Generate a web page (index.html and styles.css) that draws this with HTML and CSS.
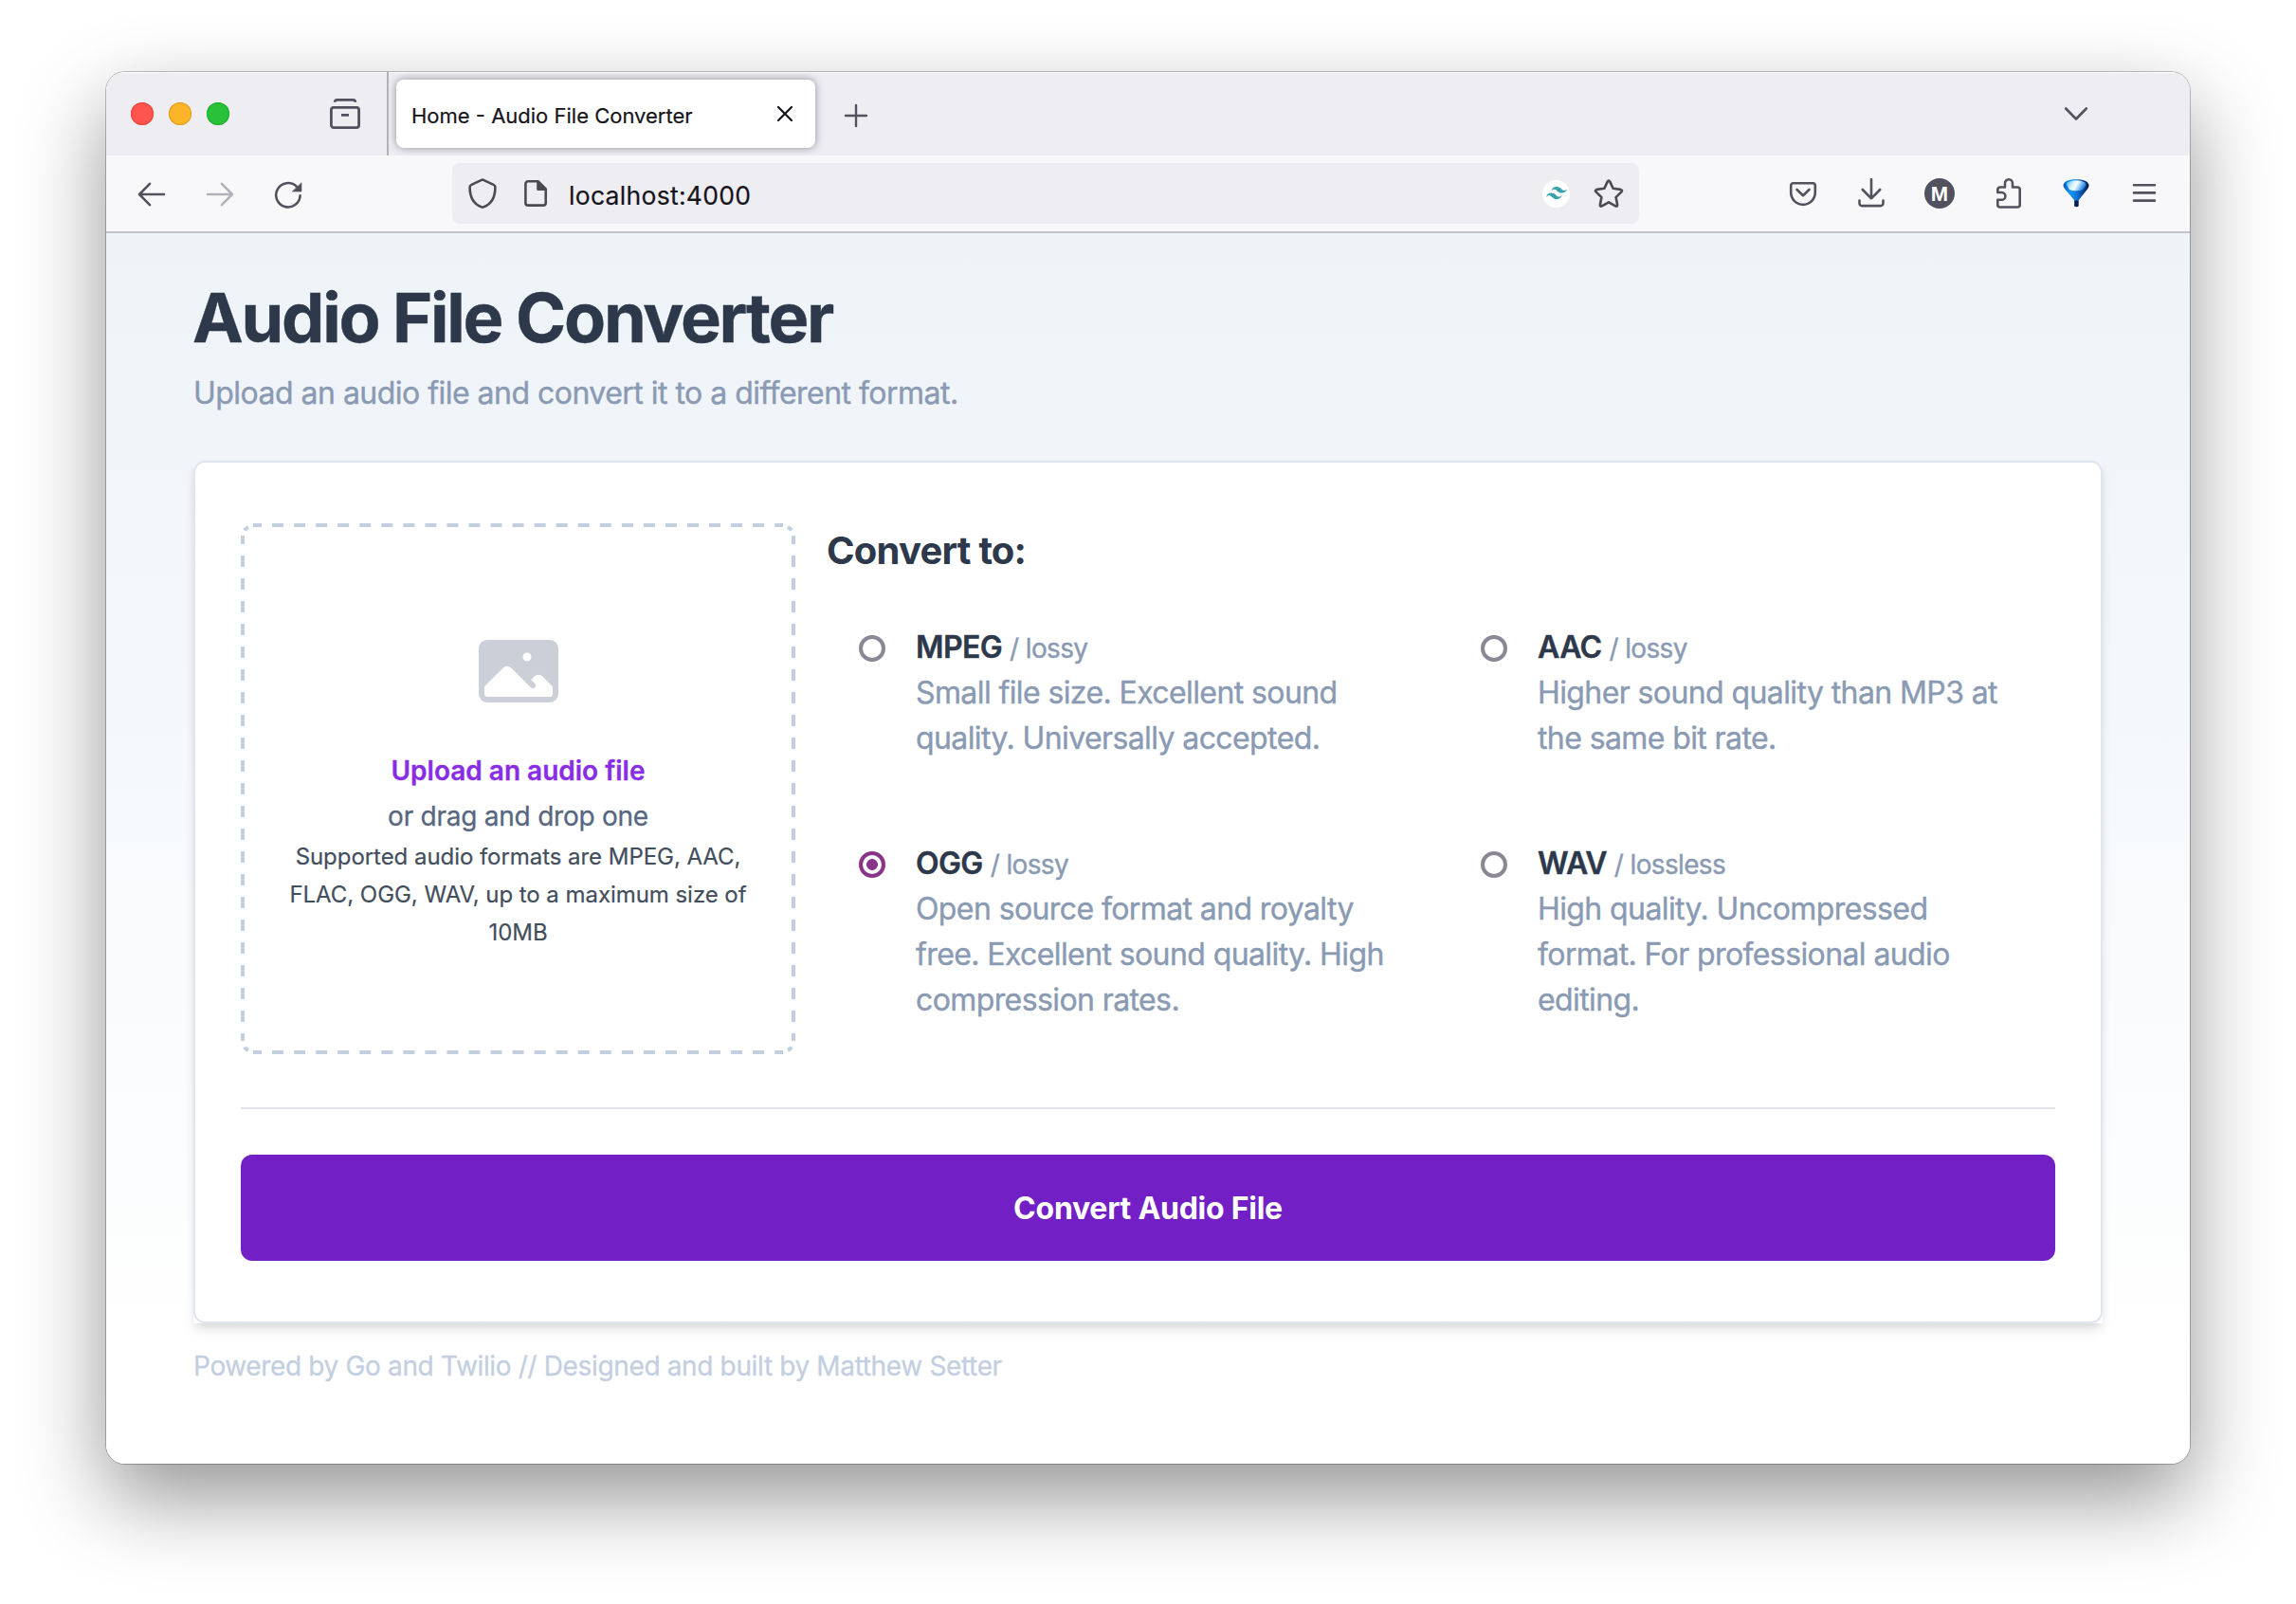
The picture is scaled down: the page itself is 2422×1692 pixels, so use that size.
FILE: index.html
```
<!DOCTYPE html>
<html lang="en">
<head>
<meta charset="utf-8">
<title>Home - Audio File Converter</title>
<link rel="stylesheet" href="styles.css">
</head>
<body>
<div class="window">
  <header class="tabbar">
    <div class="lights"><span class="light red"></span><span class="light yellow"></span><span class="light green"></span></div>
    <svg class="icon view-icon" viewBox="0 0 32 32"><rect x="1.4" y="9.4" width="29.2" height="21.2" rx="2.6"/><path d="M5.2 3.8C5.2 2.4 6 1.4 7.6 1.4h16.8c1.6 0 2.4 1 2.4 2.4M12 17.4h8"/></svg>
    <div class="tab">
      <span class="tab-title">Home - Audio File Converter</span>
      <svg class="tab-close" viewBox="0 0 16 16"><path d="M1 1l14 14M15 1L1 15"/></svg>
    </div>
    <svg class="icon new-tab" viewBox="0 0 32 32"><path d="M16 5v22M5 16h22"/></svg>
    <svg class="icon tabs-menu" viewBox="0 0 32 32"><path d="M5.2 10.500L16 21.500l10.800-11"/></svg>
  </header>

  <div class="toolbar">
    <nav class="nav">
      <svg class="icon" viewBox="0 0 32 32"><path d="M29 17H3.500M14 5.800L3 17l11 11.200"/></svg>
      <svg class="icon disabled" viewBox="0 0 32 32"><path d="M3 17h25.500M18 5.800L29 17 18 28.200"/></svg>
      <svg class="icon" viewBox="0 0 32 32"><path d="M28.600 18.200A12.700 12.700 0 1 1 24.800 8.700"/><path class="solid" d="M30 5v9h-9.500z" stroke-width="0.600"/></svg>
    </nav>
    <div class="urlbar">
      <svg class="icon dark" viewBox="0 0 32 32"><path d="M16 1.600c.4 0 .7.1 1 .3l10.600 5c1.200.5 1.800 1.300 1.800 2.500C29.400 19 26 27 17 30.400a2.500 2.500 0 0 1-2 0C6 27 2.600 19 2.600 9.400c0-1.200.6-2 1.800-2.500l10.600-5c.3-.2.6-.3 1-.3z"/></svg>
      <svg class="icon dark page-icon" viewBox="0 0 32 32"><path d="M8 3.300h10.500l8.200 8.200V26a2.600 2.600 0 0 1-2.600 2.600H8A2.600 2.600 0 0 1 5.400 26V5.900A2.600 2.600 0 0 1 8 3.300z"/><path class="solid" d="M18.500 3.500v8.200h8.200z"/></svg>
      <span class="url">localhost:4000</span>
      <span class="badge"><svg viewBox="0 0 54 33"><path d="M27 0c-7.200 0-11.700 3.600-13.500 10.800 2.700-3.600 5.850-4.950 9.450-4.050 2.054.513 3.522 2.004 5.147 3.653C30.744 13.090 33.808 16.200 40.500 16.200c7.200 0 11.700-3.600 13.500-10.800-2.700 3.600-5.850 4.950-9.450 4.050-2.054-.513-3.522-2.004-5.147-3.653C36.756 3.110 33.692 0 27 0zM13.500 16.200C6.300 16.200 1.800 19.800 0 27c2.700-3.600 5.850-4.950 9.450-4.050 2.054.514 3.522 2.004 5.147 3.653C17.244 29.290 20.308 32.400 27 32.400c7.200 0 11.700-3.600 13.500-10.800-2.700 3.600-5.850 4.950-9.450 4.050-2.054-.513-3.522-2.004-5.147-3.653C23.256 19.310 20.192 16.200 13.500 16.200z"/></svg></span>
      <svg class="icon dark" viewBox="0 0 32 32"><path d="M14.700 3.600Q16 1.400 17.300 3.600l3.300 7.200 7.900 1.100q2.500.6.900 2.500l-5.800 5.700 1.500 7.900q.2 2.300-1.900 1.400L16 25.300l-7.200 4.100q-2.100.9-1.900-1.400l1.500-7.900-5.800-5.700q-1.600-1.900.9-2.500l7.900-1.100z"/></svg>
    </div>
    <div class="actions">
      <svg class="icon" viewBox="0 0 32 32"><path d="M5.700 5.300h20.600a2.500 2.500 0 0 1 2.500 2.500v7.300a12.800 12.800 0 0 1-25.600 0V7.800a2.500 2.500 0 0 1 2.500-2.500zM9.500 12l6.500 6.300 6.500-6.300"/></svg>
      <svg class="icon" viewBox="0 0 32 32"><path d="M16 1.200v20M6.800 12l9.200 9.300 9.200-9.300M3.500 23.500v3a2.600 2.600 0 0 0 2.600 2.600h19.800a2.600 2.600 0 0 0 2.600-2.600v-3"/></svg>
      <span class="avatar">M</span>
      <svg class="icon" viewBox="0 0 32 32"><path d="M5.300 15V12a2.500 2.500 0 0 1 2.500-2.500H13V5.300a4 4 0 0 1 8 0v4.200h5.200a2.500 2.500 0 0 1 2.500 2.500v16a2.500 2.500 0 0 1-2.500 2.500H7.800A2.500 2.500 0 0 1 5.300 28v-5.200h4.200a3.900 3.900 0 0 0 0-7.800z"/></svg>
      <svg class="funnel" viewBox="0 0 32 32">
        <defs>
          <linearGradient id="sides" x1="0" x2="1"><stop offset="0" stop-color="#0a4fae"/><stop offset=".25" stop-color="#149af2"/><stop offset=".5" stop-color="#0f78dd"/><stop offset=".75" stop-color="#0848a0"/><stop offset="1" stop-color="#04183f"/></linearGradient>
          <linearGradient id="shine" x1="0" x2="1" y1="0" y2=".3"><stop offset="0" stop-color="#1ea6fb"/><stop offset=".4" stop-color="#d8f4ff"/><stop offset=".6" stop-color="#f2fcff"/><stop offset="1" stop-color="#1f86e4"/></linearGradient>
        </defs>
        <path fill="url(#sides)" d="M2.600 6.800C3.800 3 9 1.300 16 1.300s12.400 1.700 13.500 5.500c.3 1.700-.5 3.200-1.500 4.700l-8.600 10.700c-.6.800-.9 1.400-.9 2.500v4.300c0 1.600-4.200 1.600-4.200 0v-4.300c0-1.100-.3-1.700-.9-2.500L4.300 11.500C3.200 10 2.300 8.500 2.600 6.800z"/>
        <path fill="url(#shine)" d="M5.500 6C7.500 3.500 11 2.300 16 2.300s8.500 1.200 10.500 3.700c-.5 3.500-3 6.500-6.500 7-4 .5-8 .3-11-1z"/>
        <path fill="#03204c" d="M14.300 23.500h4.200V29c0 1.600-4.200 1.600-4.200 0z"/>
      </svg>
      <svg class="icon" viewBox="0 0 32 32"><path d="M5 7.200h22M5 15.400h22M5 23.600h22"/></svg>
    </div>
  </div>

  <main class="page">
    <h1>Audio File Converter</h1>
    <p class="subtitle">Upload an audio file and convert it to a different format.</p>

    <form class="card-shadow">
      <div class="card">
        <div class="columns">
          <div class="dropzone">
            <svg class="dashes" viewBox="0 0 585 560">
              <path stroke-dasharray="12 11.050" stroke-dashoffset="3" d="M13 2h559M13 558h559"/>
              <path stroke-dasharray="12 12" stroke-dashoffset="3" d="M2 13v533M583 13v533"/>
              <path d="M4 7.500Q5 5.500 8 4M581 7.500Q580 5.500 577 4M4 552.500Q5 554.500 8 556M581 552.500Q580 554.500 577 556"/>
            </svg>
            <svg class="photo" viewBox="0 0 24 24"><path fill-rule="evenodd" d="M1.500 6a2.250 2.250 0 012.250-2.250h16.500A2.250 2.250 0 0122.500 6v12a2.250 2.250 0 01-2.250 2.250H3.750A2.250 2.250 0 011.500 18V6zM3 16.060V18c0 .414.336.75.75.75h16.500A.75.75 0 0021 18v-1.940l-2.690-2.689a1.500 1.500 0 00-2.120 0l-.88.879.97.970a.75.75 0 11-1.060 1.060l-5.160-5.159a1.500 1.500 0 00-2.120 0L3 16.061zm10.125-7.810a1.125 1.125 0 112.250 0 1.125 1.125 0 01-2.250 0z" clip-rule="evenodd"/></svg>
            <strong class="upload">Upload an audio file</strong>
            <span class="drag">or drag and drop one</span>
            <p class="supported">Supported audio formats are MPEG, AAC,<br>FLAC, OGG, WAV, up to a maximum size of<br>10MB</p>
          </div>
          <section class="formats">
            <h2>Convert to:</h2>
            <div class="options">
              <label class="option"><span class="radio"></span><span class="text"><b>MPEG</b><small>/ lossy</small><br>Small file size. Excellent sound<br>quality. Universally accepted.</span></label>
              <label class="option"><span class="radio"></span><span class="text"><b>AAC</b><small>/ lossy</small><br>Higher sound quality than MP3 at<br>the same bit rate.</span></label>
              <label class="option"><span class="radio checked"></span><span class="text"><b>OGG</b><small>/ lossy</small><br>Open source format and royalty<br>free. Excellent sound quality. High<br>compression rates.</span></label>
              <label class="option"><span class="radio"></span><span class="text"><b>WAV</b><small>/ lossless</small><br>High quality. Uncompressed<br>format. For professional audio<br>editing.</span></label>
            </div>
          </section>
        </div>
        <hr>
        <button type="button">Convert Audio File</button>
      </div>
    </form>

    <footer>Powered by Go and Twilio // Designed and built by Matthew Setter</footer>
  </main>
</div>
</body>
</html>
```
FILE: styles.css
```
* { box-sizing: border-box; margin: 0; padding: 0; }

body {
  width: 2422px;
  height: 1692px;
  padding: 76px 112px 0;
  overflow: hidden;
  background: #fff;
  font-family: Inter, "Liberation Sans", sans-serif;
}

.window {
  width: 2198px;
  height: 1468px;
  border-radius: 20px;
  overflow: hidden;
  background: #fff;
  box-shadow: 0 0 0 1px rgba(0, 0, 0, .24), 0 36px 88px rgba(0, 0, 0, .42);
}

/* browser chrome */
.icon {
  width: 32px;
  height: 32px;
  flex: none;
  fill: none;
  stroke: #52525e;
  stroke-width: 2.6;
  stroke-linecap: round;
  stroke-linejoin: round;
}
.icon.dark { stroke: #4a4a50; }
.icon.disabled { stroke: #b2b2ba; }
.icon .solid { fill: #52525e; }
.icon.dark .solid { fill: #4a4a50; }

.tabbar {
  display: flex;
  align-items: center;
  height: 88px;
  background: #eeedf2;
  box-shadow: inset 0 2px 1px -1px #fff;
}
.lights { display: flex; gap: 16px; margin-left: 26px; }
.light { width: 24px; height: 24px; border-radius: 50%; }
.red { background: #fe544d; box-shadow: inset 0 0 0 1px #e2463f; }
.yellow { background: #feb429; box-shadow: inset 0 0 0 1px #e09c20; }
.green { background: #28c137; box-shadow: inset 0 0 0 1px #1dab2b; }
.view-icon { margin: 0 28px 0 106px; stroke-width: 2.8; stroke-linecap: butt; }
.tab {
  position: relative;
  display: flex;
  align-items: center;
  justify-content: space-between;
  width: 442px;
  height: 72px;
  margin-left: 10px;
  padding: 0 24px 0 16px;
  border-radius: 8px;
  background: #fff;
  box-shadow: 0 0 8px rgba(60, 60, 75, .55);
}
.tab::before {
  content: "";
  position: absolute;
  left: -10px;
  top: -8px;
  width: 2px;
  height: 88px;
  background: #b2b1b9;
}
.tab-title { font-size: 22px; line-height: 28px; padding-top: 4px; color: #15141a; -webkit-text-stroke: .2px; }
.tab-close { width: 16px; height: 16px; fill: none; stroke: #15141a; stroke-width: 2.2; stroke-linecap: round; }
.new-tab { margin-left: 27px; margin-top: 3px; stroke-width: 2.4; }
.tabs-menu { margin-left: auto; margin-right: 104px; }

.toolbar {
  display: flex;
  align-items: center;
  height: 82px;
  padding: 0 32px;
  border-bottom: 2px solid #c4c4c9;
  background: #f8f8fb;
}
.nav { display: flex; gap: 40px; }
.urlbar {
  display: flex;
  align-items: center;
  width: 1252px;
  height: 64px;
  margin-left: 157px;
  padding: 0 16px;
  border-radius: 8px;
  background: #eeedf2;
}
.page-icon { margin-left: 24px; }
.url { margin-left: 19px; font-size: 26.5px; letter-spacing: .3px; line-height: 32px; color: #15141a; padding-top: 3px; -webkit-text-stroke: .2px; }
.badge {
  display: flex;
  align-items: center;
  justify-content: center;
  width: 29px;
  height: 29px;
  margin-left: auto;
  margin-right: 25px;
  border-radius: 50%;
  background: #fff;
}
.badge svg { width: 22px; fill: #38a3ab; }
.actions { display: flex; gap: 40px; margin-left: auto; }
.avatar {
  width: 32px;
  height: 32px;
  border-radius: 50%;
  background: #52525e;
  color: #fff;
  font: bold 22px/33px "Liberation Sans", sans-serif;
  text-align: center;
}
.funnel { width: 32px; height: 32px; }

/* page */
.page {
  height: 1298px;
  padding: 49px 92px 0;
  background: linear-gradient(#eef3f8, #fff 1200px);
}
h1 { margin-left: -1px; font-size: 72px; line-height: 80px; letter-spacing: -2.26px; color: #2d384b; -webkit-text-stroke: .4px; }
.subtitle { margin-top: 16px; font-size: 32px; line-height: 48px; letter-spacing: -.52px; color: #8a9ab3; -webkit-text-stroke: .4px; }

.card-shadow {
  margin-top: 47px;
  box-shadow: 0 8px 12px -2px rgba(0, 0, 0, .1), 0 4px 8px -2px rgba(0, 0, 0, .08);
}
.card {
  height: 910px;
  padding: 64px 48px;
  border: 2px solid #dfe6f0;
  border-radius: 12px;
  background: #fff;
}
.columns { display: flex; gap: 33px; }

.dropzone {
  position: relative;
  display: flex;
  flex-direction: column;
  align-items: center;
  width: 585px;
  height: 560px;
  padding-top: 108px;
  text-align: center;
}
.dashes { position: absolute; inset: 0; width: 585px; height: 560px; fill: none; stroke: #c3cfdf; stroke-width: 4; }
.photo { width: 96px; height: 96px; fill: #cbd0d8; }
.upload { margin-top: 33px; font-size: 28px; font-weight: 600; line-height: 48px; color: #892ce6; -webkit-text-stroke: .3px; }
.drag { font-size: 28px; line-height: 48px; letter-spacing: -.24px; color: #56677f; margin-bottom: -1px; -webkit-text-stroke: .3px; }
.supported { font-size: 24px; line-height: 40px; letter-spacing: -.05px; color: #434e5c; -webkit-text-stroke: .2px; }

.formats { flex: 1; padding-top: 1px; }
h2 { font-size: 40px; line-height: 56px; letter-spacing: -.78px; color: #2d384b; }
.options {
  display: grid;
  grid-template-columns: 640px 640px;
  column-gap: 16px;
  row-gap: 36px;
  grid-auto-rows: 192px;
  margin-top: 50px;
}
.option { display: flex; padding-left: 34px; }
.radio {
  flex: none;
  width: 28px;
  height: 28px;
  margin: 11px 32px 0 0;
  border: 4px solid #8b8795;
  border-radius: 50%;
}
.radio.checked { border-color: #893488; background: radial-gradient(circle, #893488 5.500px, #fff 6.300px); }
.text { font-size: 32px; line-height: 48px; letter-spacing: -.6px; white-space: nowrap; color: #8a9ab3; -webkit-text-stroke: .4px; }
.text b { font-weight: 600; color: #2d384b; }
.text small { margin-left: 8px; font-size: 28px; line-height: 1; letter-spacing: -.65px; }

hr { height: 2px; margin: 56px 0 48px; border: 0; background: #e2e3ea; }
button {
  display: block;
  width: 100%;
  height: 112px;
  padding-top: 1px;
  border: 0;
  border-radius: 12px;
  background: #7220c6;
  color: #fff;
  font: 700 32px/48px Inter, "Liberation Sans", sans-serif;
  letter-spacing: -.25px;
}
footer { margin-top: 25px; font-size: 28px; line-height: 40px; letter-spacing: -.35px; color: #c3cfdf; -webkit-text-stroke: .3px; }
```
